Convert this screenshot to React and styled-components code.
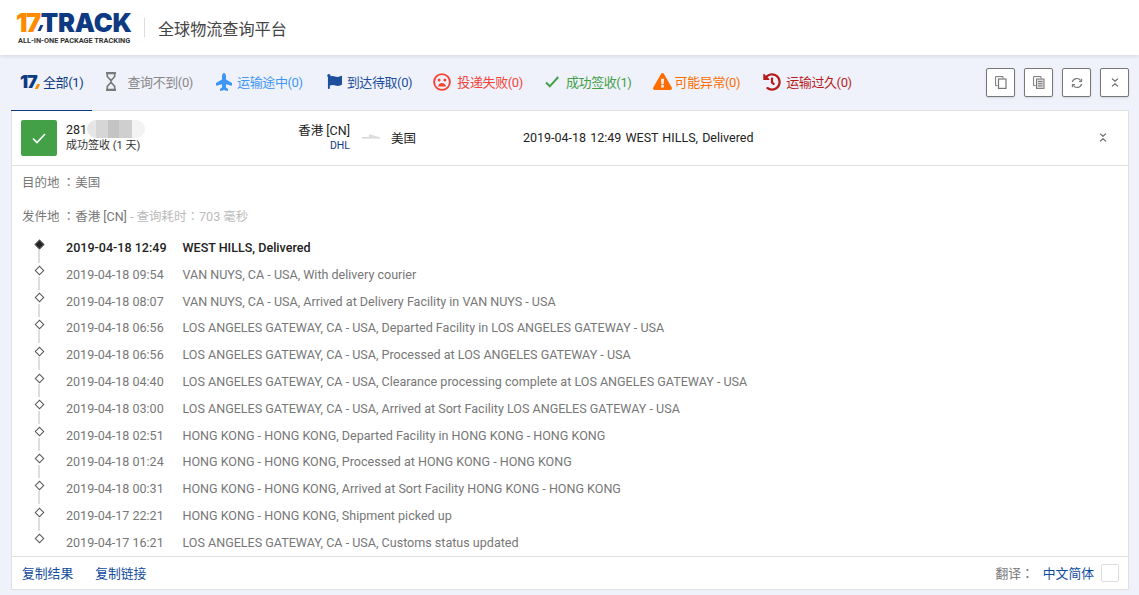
import React from "react";
import styled, { createGlobalStyle } from "styled-components";
import { FaPlane, FaFlag, FaExclamationTriangle, FaHistory } from "react-icons/fa";

const GlobalStyle = createGlobalStyle`
  html, body {
    margin: 0;
    padding: 0;
    height: 100%;
    background: #eff2fb;
    overflow: hidden;
    font-family: Roboto, "Noto Sans CJK SC", sans-serif;
  }
`;

const Page = styled.div`
  width: 1139px;
  height: 595px;
  display: flex;
  flex-direction: column;
`;

const Header = styled.header`
  height: 55px;
  flex: none;
  display: flex;
  align-items: center;
  padding-left: 16px;
  background: #fff;
  box-shadow: 0 1px 4px rgba(0, 0, 0, 0.12);
`;

const Logo = styled.div`
  width: 116px;
  display: flex;
  flex-direction: column;
  margin-top: 1px;
`;

const LogoMark = styled.div`
  display: flex;
  align-items: center;
  height: 21px;
  font-family: Inter, Roboto, sans-serif;
  font-weight: 900;
  font-size: 25.5px;
  line-height: 21px;
  letter-spacing: -0.2px;
  color: #0e3a82;
`;

const LogoSeven = styled.span`
  color: #ff8a00;
  letter-spacing: -1.5px;
  margin-right: 1px;
  position: relative;
  &::after {
    content: "";
    position: absolute;
    right: -2px;
    bottom: 2px;
    width: 3px;
    height: 6px;
    background: #0e3a82;
    transform: skewX(-25deg);
  }
`;

const LogoTag = styled.div`
  font-family: Roboto, sans-serif;
  font-weight: 700;
  font-size: 7.35px;
  line-height: 9px;
  margin-top: 3px;
  padding-left: 2px;
  color: #333;
  white-space: nowrap;
`;

const HeaderDivider = styled.div`
  width: 1px;
  height: 19px;
  background: #ddd;
  margin: 0 13px 0 12px;
`;

const HeaderTitle = styled.h1`
  margin: 0;
  font-weight: 400;
  font-size: 16.1px;
  color: #444;
`;

const Toolbar = styled.nav`
  height: 55px;
  flex: none;
  display: flex;
  align-items: center;
  padding: 0 10px 0 20px;
  position: relative;
`;

const Tabs = styled.div`
  display: flex;
  align-items: center;
  gap: 21px;
  flex: 1;
  margin-bottom: 2px;
`;

const Tab = styled.div`
  display: flex;
  align-items: center;
  gap: ${(p) => p.$gap || 6}px;
  margin-left: ${(p) => p.$shift || 0}px;
  font-size: 13px;
  letter-spacing: -0.38px;
  color: ${(p) => p.$color};
  white-space: nowrap;
`;

const ActiveLine = styled.div`
  position: absolute;
  left: 11px;
  bottom: -1px;
  width: 81px;
  height: 1px;
  background: #0e3a82;
`;

const TabLogo = styled.span`
  font-family: Inter, Roboto, sans-serif;
  font-weight: 900;
  font-size: 18px;
  letter-spacing: -1.2px;
  color: #0e3a82;
  width: 18px;
  position: relative;
  line-height: 18px;
  &::after {
    content: "";
    position: absolute;
    right: -1px;
    bottom: 2px;
    width: 3px;
    height: 5px;
    background: #ff8a00;
    transform: skewX(-25deg);
  }
`;

const ToolButtons = styled.div`
  display: flex;
  gap: 9px;
`;

const ToolButton = styled.button`
  width: 29px;
  height: 29px;
  padding: 0;
  display: flex;
  align-items: center;
  justify-content: center;
  background: #fff;
  border: 1px solid #777;
  border-radius: 2px;
  box-shadow: 0 1px 2px rgba(0, 0, 0, 0.12);
`;

const Card = styled.section`
  margin: 0 10px 0 11px;
  height: 480px;
  flex: none;
  display: flex;
  flex-direction: column;
  background: #fff;
  border: 1px solid #e0e0e0;
  box-sizing: border-box;
`;

const Summary = styled.div`
  height: 55px;
  flex: none;
  display: flex;
  align-items: center;
  border-bottom: 1px solid #e0e0e0;
  box-sizing: border-box;
  padding: 0 0 2px 9px;
`;

const StatusBox = styled.div`
  width: 36px;
  height: 36px;
  border-radius: 2px;
  background: #43a047;
  display: flex;
  align-items: center;
  justify-content: center;
  margin-top: 2px;
`;

const NumberCol = styled.div`
  width: 193px;
  margin-left: 9px;
`;

const TrackNo = styled.div`
  display: flex;
  align-items: center;
  height: 18px;
  font-size: 12.5px;
  color: #222;
`;

const Blur = styled.div`
  width: 58px;
  height: 18px;
  border-radius: 9px;
  background: linear-gradient(90deg, #e6e6e6 0 15%, #d6d6d6 15% 36%, #c4c4c4 36% 55%, #cfcfcf 55% 78%, #f3f3f3 78% 100%);
`;

const StatusText = styled.div`
  font-size: 11px;
  line-height: 16px;
  color: #333;
`;

const Origin = styled.div`
  width: 91px;
  text-align: right;
  font-size: 12.5px;
  line-height: 16px;
  color: #222;
`;

const Carrier = styled.div`
  font-size: 10.5px;
  line-height: 13px;
  color: #0e3a82;
`;

const ArrowBox = styled.div`
  width: 41px;
  display: flex;
  justify-content: center;
`;

const Dest = styled.div`
  width: 132px;
  font-size: 12.5px;
  color: #222;
`;

const Latest = styled.div`
  flex: 1;
  font-size: 12.5px;
  color: #222;
  word-spacing: 1px;
`;

const CollapseIcon = styled.div`
  width: 29px;
  display: flex;
`;

const Details = styled.div`
  flex: 1;
  padding: 0 10px;
  overflow: hidden;
`;

const InfoLine = styled.div`
  height: 17px;
  line-height: 17px;
  font-size: 12.5px;
  color: #777;
  margin-top: ${(p) => p.$top}px;
`;

// the fullwidth colon sits centred in its cell, as in the traditional forms
const Colon = styled.span`
  font-family: "Noto Sans CJK TC", sans-serif;
`;

const Muted = styled.span`
  color: #bbb;
`;

const Events = styled.ol`
  list-style: none;
  margin: 10px 0 0;
  padding: 0;
`;

const Event = styled.li`
  height: 26.82px;
  display: grid;
  grid-template-columns: 44px 116.5px 1fr;
  align-items: center;
  font-size: 12.55px;
  color: ${(p) => (p.$first ? "#222" : "#777")};
  font-weight: ${(p) => (p.$first ? 500 : 400)};
  white-space: nowrap;
`;

const Node = styled.div`
  position: relative;
  height: 100%;
  margin-left: 11px;
  &::before {
    content: "";
    position: absolute;
    left: 2.5px;
    top: 6.5px;
    width: 7px;
    height: 7px;
    box-sizing: border-box;
    transform: rotate(45deg);
    border: 1px solid #555;
    background: ${(p) => (p.$first ? "#222" : "#fff")};
  }
  &::after {
    content: "";
    display: ${(p) => (p.$last ? "none" : "block")};
    position: absolute;
    left: 5px;
    top: 16px;
    width: 2px;
    height: 13px;
    background: #ddd;
  }
`;

const Footer = styled.footer`
  height: 33px;
  flex: none;
  display: flex;
  align-items: center;
  border-top: 1px solid #e0e0e0;
  padding: 0 9px 1px 10px;
  box-sizing: border-box;
  font-size: 12.8px;
`;

const FooterLink = styled.a`
  color: #0e4a9e;
  margin-right: ${(p) => p.$gap}px;
`;

const Spacer = styled.div`
  flex: 1;
`;

const TranslateLabel = styled.span`
  color: #777;
  margin-right: 9px;
`;

const LangBox = styled.div`
  width: 18px;
  height: 18px;
  margin-left: 7px;
  box-sizing: border-box;
  border: 1px solid #ddd;
  border-radius: 2px;
`;

function Hourglass() {
  return (
    <svg width="12" height="19" viewBox="0 0 12 19" fill="none" stroke="#7a7a7a">
      <path d="M1 1.2h10M1 17.8h10" strokeWidth="2.2" />
      <path d="M2.3 2v2.5L6 8.6v1.6L2.3 14.4V17M9.7 2v2.5L6 8.6v1.6l3.7 4.2V17" strokeWidth="1.6" />
    </svg>
  );
}

function SadFace() {
  return (
    <svg width="18" height="18" viewBox="0 0 18 18">
      <circle cx="9" cy="9" r="7.9" fill="none" stroke="#f44336" strokeWidth="1.9" />
      <circle cx="6.1" cy="6.9" r="1.5" fill="#f44336" />
      <circle cx="11.9" cy="6.9" r="1.5" fill="#f44336" />
      <path d="M5 13.4c.6-2.5 2.2-3.3 4-3.3s3.4.8 4 3.3z" fill="#f44336" />
    </svg>
  );
}

function ThinCheck() {
  return (
    <svg width="14" height="12" viewBox="0 0 14 12" fill="none" stroke="#43a047" strokeWidth="2">
      <path d="M1 6.5l3.8 3.8L13.2 1" />
    </svg>
  );
}

function CopyIcon() {
  return (
    <svg width="12" height="13" viewBox="0 0 12 13" fill="none" stroke="#777">
      <path d="M8 2.5V.6H.6v9h2" />
      <rect x="3.5" y="3" width="7.5" height="9.4" strokeWidth="1.2" />
    </svg>
  );
}

function CopyAllIcon() {
  return (
    <svg width="12" height="13" viewBox="0 0 12 13" fill="none" stroke="#777">
      <path d="M8 2.5V.6H.6v9h2" />
      <rect x="3.5" y="3" width="7.5" height="9.4" fill="#ddd" />
      <path d="M5 5.5h4.5M5 7.7h4.5M5 9.9h4.5" />
    </svg>
  );
}

function RefreshIcon() {
  return (
    <svg width="12" height="12" viewBox="0 0 12 12" fill="none" stroke="#777" strokeWidth="1.1">
      <path d="M1.3 5A4.8 4.8 0 0 1 9.8 3.5" />
      <path d="M10.7 7A4.8 4.8 0 0 1 2.2 8.5" />
      <path d="M10.6 1.8v2.6H8M1.4 10.2V7.6H4" />
    </svg>
  );
}

function CollapseChevrons() {
  return (
    <svg width="8" height="9" viewBox="0 0 8 9" fill="none" stroke="#666" strokeWidth="1.2">
      <path d="M1 .6l3 2.6 3-2.6M1 8.4l3-2.6 3 2.6" />
    </svg>
  );
}

function RouteArrow() {
  return (
    <svg width="18" height="6" viewBox="0 0 18 6">
      <path d="M0 3.2h18v1.2H0z" fill="#ccc" />
      <path d="M7 0l11 3.4H7z" fill="#ddd" />
    </svg>
  );
}

const TABS = [
  { label: "查询不到(0)", color: "#888", icon: <Hourglass />, gap: 10, shift: 1 },
  { label: "运输途中(0)", color: "#3f97f5", icon: <FaPlane size={18} color="#3f97f5" style={{ transform: "rotate(-90deg)" }} />, gap: 4, shift: 1 },
  { label: "到达待取(0)", color: "#1d4f9c", icon: <FaFlag size={15} color="#1d4f9c" />, gap: 5, shift: 3 },
  { label: "投递失败(0)", color: "#f44336", icon: <SadFace />, gap: 6 },
  { label: "成功签收(1)", color: "#43a047", icon: <ThinCheck />, gap: 7, shift: 1 },
  { label: "可能异常(0)", color: "#ff6d00", icon: <FaExclamationTriangle size={19} color="#ff6d00" />, gap: 3 },
  { label: "运输过久(0)", color: "#b71c1c", icon: <FaHistory size={18} color="#b71c1c" />, gap: 5, shift: 2 },
];

const EVENTS = [
  ["2019-04-18 12:49", "WEST HILLS, Delivered"],
  ["2019-04-18 09:54", "VAN NUYS, CA - USA, With delivery courier"],
  ["2019-04-18 08:07", "VAN NUYS, CA - USA, Arrived at Delivery Facility in VAN NUYS - USA"],
  ["2019-04-18 06:56", "LOS ANGELES GATEWAY, CA - USA, Departed Facility in LOS ANGELES GATEWAY - USA"],
  ["2019-04-18 06:56", "LOS ANGELES GATEWAY, CA - USA, Processed at LOS ANGELES GATEWAY - USA"],
  ["2019-04-18 04:40", "LOS ANGELES GATEWAY, CA - USA, Clearance processing complete at LOS ANGELES GATEWAY - USA"],
  ["2019-04-18 03:00", "LOS ANGELES GATEWAY, CA - USA, Arrived at Sort Facility LOS ANGELES GATEWAY - USA"],
  ["2019-04-18 02:51", "HONG KONG - HONG KONG, Departed Facility in HONG KONG - HONG KONG"],
  ["2019-04-18 01:24", "HONG KONG - HONG KONG, Processed at HONG KONG - HONG KONG"],
  ["2019-04-18 00:31", "HONG KONG - HONG KONG, Arrived at Sort Facility HONG KONG - HONG KONG"],
  ["2019-04-17 22:21", "HONG KONG - HONG KONG, Shipment picked up"],
  ["2019-04-17 16:21", "LOS ANGELES GATEWAY, CA - USA, Customs status updated"],
];

export default function App() {
  return (
    <Page>
      <GlobalStyle />
      <Header>
        <Logo>
          <LogoMark>
            <LogoSeven>17</LogoSeven>TRACK
          </LogoMark>
          <LogoTag>ALL-IN-ONE PACKAGE TRACKING</LogoTag>
        </Logo>
        <HeaderDivider />
        <HeaderTitle>全球物流查询平台</HeaderTitle>
      </Header>
      <Toolbar>
        <Tabs>
          <Tab $color="#0e3a82" $gap={5}>
            <TabLogo>17</TabLogo>全部(1)
          </Tab>
          {TABS.map((t) => (
            <Tab key={t.label} $color={t.color} $gap={t.gap} $shift={t.shift}>
              {t.icon}
              {t.label}
            </Tab>
          ))}
        </Tabs>
        <ToolButtons>
          <ToolButton><CopyIcon /></ToolButton>
          <ToolButton><CopyAllIcon /></ToolButton>
          <ToolButton><RefreshIcon /></ToolButton>
          <ToolButton><CollapseChevrons /></ToolButton>
        </ToolButtons>
        <ActiveLine />
      </Toolbar>
      <Card>
        <Summary>
          <StatusBox>
            <svg width="14" height="11" viewBox="0 0 14 11" fill="none" stroke="#fff" strokeWidth="1.6">
              <path d="M1 5.5l4 4 8-8.5" />
            </svg>
          </StatusBox>
          <NumberCol>
            <TrackNo>281<Blur /></TrackNo>
            <StatusText>成功签收 (1 天)</StatusText>
          </NumberCol>
          <Origin>
            香港 [CN]
            <Carrier>DHL</Carrier>
          </Origin>
          <ArrowBox><RouteArrow /></ArrowBox>
          <Dest>美国</Dest>
          <Latest>2019-04-18 12:49 WEST HILLS, Delivered</Latest>
          <CollapseIcon><CollapseChevrons /></CollapseIcon>
        </Summary>
        <Details>
          <InfoLine $top={7}>目的地 <Colon>：</Colon>美国</InfoLine>
          <InfoLine $top={17}>
            发件地 <Colon>：</Colon>香港 [CN] <Muted>- 查询耗时<Colon>：</Colon>703 毫秒</Muted>
          </InfoLine>
          <Events>
            {EVENTS.map(([time, text], i) => (
              <Event key={time + text} $first={i === 0}>
                <Node $first={i === 0} $last={i === EVENTS.length - 1} />
                <span>{time}</span>
                <span>{text}</span>
              </Event>
            ))}
          </Events>
        </Details>
        <Footer>
          <FooterLink $gap={22}>复制结果</FooterLink>
          <FooterLink $gap={0}>复制链接</FooterLink>
          <Spacer />
          <TranslateLabel>翻译<Colon>：</Colon></TranslateLabel>
          <FooterLink $gap={0}>中文简体</FooterLink>
          <LangBox />
        </Footer>
      </Card>
    </Page>
  );
}
